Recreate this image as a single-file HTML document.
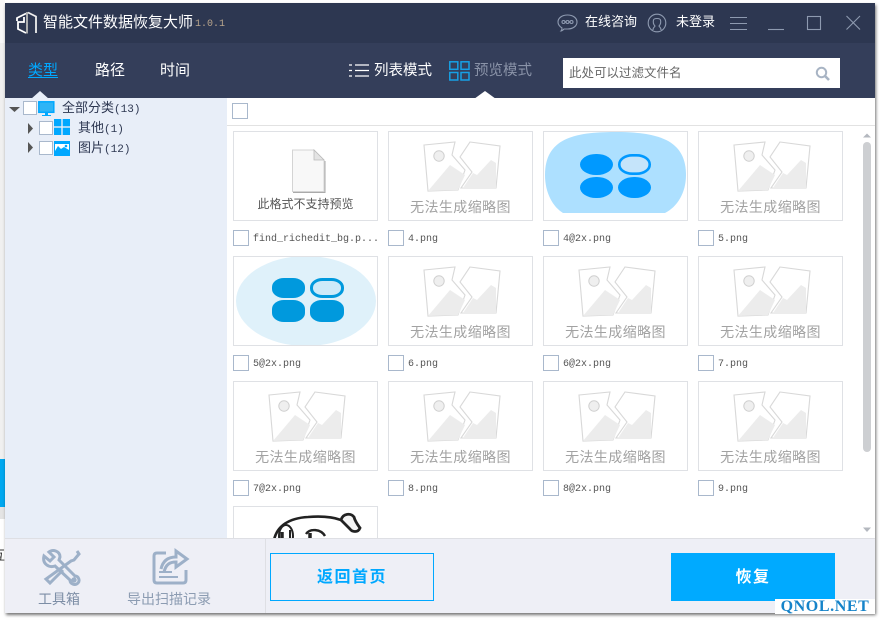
<!DOCTYPE html>
<html><head><meta charset="utf-8"><style>
html,body{margin:0;padding:0;width:880px;height:620px;overflow:hidden;background:#fff}
body{position:relative;font-family:"Liberation Sans","Noto Sans CJK SC",sans-serif}
.a{position:absolute;white-space:nowrap}
.cb{position:absolute;box-sizing:border-box;width:16px;height:16px;background:#fff;border:1px solid #a9b8cc}
.th{position:absolute;box-sizing:border-box;width:145px;height:90px;border:1px solid #dfe1e5;background:#fff;overflow:hidden}
.th svg{position:absolute;left:-1px;top:-1px}
.th span{position:absolute;left:0;width:143px;top:65px;text-align:center;font-size:14px;letter-spacing:.4px;line-height:20px;color:#a2a2a2}
.lb{position:absolute;font:10px/12px "Liberation Mono",monospace;color:#555;white-space:nowrap}
.tr{font-size:13px;line-height:17px;color:#2d3751}
.tr i{font:normal 11px/17px "Liberation Mono",monospace}
</style></head><body>
<svg width="0" height="0" style="position:absolute"><defs>
<g id="br"><path d="M36 14L67 11 64 24 77 39 70 59 40 60Z" fill="#fff" stroke="#d8d8d8" stroke-width="1.100"/><path d="M82 11L112 15 108 57 73 57 84 41 72 26Z" fill="#fff" stroke="#d8d8d8" stroke-width="1.100"/><path d="M40 60L62 34 77 44 70 59Z" fill="#ececec"/><path d="M75 57L85 42 89 44 103 29 108 32 108 57Z" fill="#ececec"/><circle cx="51" cy="25" r="5.200" fill="#efefef" stroke="#d0d0d0"/></g>
</defs></svg>

<!-- background window behind -->
<div class="a" style="left:0;top:0;width:5px;height:43px;background:#f8f8f8"></div>
<div class="a" style="left:0;top:43px;width:5px;height:416px;background:#f0f0f0"></div>
<div class="a" style="left:0;top:459px;width:5px;height:48px;background:#00a8f0"></div>
<div class="a" style="left:0;top:507px;width:5px;height:12px;background:#e4e4e4"></div>
<div class="a" style="left:-8px;top:548px;font-size:13px;line-height:16px;color:#333">互</div>

<!-- window -->
<div class="a" style="left:5px;top:3px;width:870px;height:610px;background:#fff;box-shadow:1px 2px 3px rgba(0,0,0,.55)"></div>
<div class="a" style="left:5px;top:3px;width:870px;height:40px;background:#2d3751"></div>
<div class="a" style="left:5px;top:43px;width:870px;height:55px;background:#343e5a"></div>

<!-- logo -->
<svg class="a" style="left:0;top:0" width="40" height="40" fill="none" stroke="#fff" stroke-width="1.800"><path d="M26 13.500L17 18V21M24 17V22H18V29L26 33"/><path d="M27 12V33.500" stroke="#bbb"/><path d="M28 12.500L36 16.500V33" stroke="#eee"/></svg>
<div class="a" style="left:43px;top:12px;font-size:15px;line-height:22px;color:#fff">智能文件数据恢复大师</div>
<div class="a" style="left:195px;top:18px;font:10px/13px 'Liberation Mono',monospace;color:#b9a58c">1.0.1</div>

<!-- header right -->
<svg class="a" style="left:556px;top:12px" width="24" height="24" fill="none" stroke="#8e9ab0" stroke-width="1.100"><path d="M5 19C6 18 6 17 6 16 3 14 2 12 2 10 2 6 6 3 11.500 3S21 6 21 10 17 17 11.500 17C10 17 9 17 8 17 7 18 6 19 5 19Z"/><circle cx="7.500" cy="10" r="1.500"/><circle cx="11.500" cy="10" r="1.500"/><circle cx="15.500" cy="10" r="1.500"/></svg>
<div class="a" style="left:585px;top:13px;font-size:13px;line-height:18px;color:#fff">在线咨询</div>
<svg class="a" style="left:647px;top:13px" width="20" height="20" fill="none" stroke="#8e9ab0" stroke-width="1.100"><circle cx="10" cy="10" r="8.800"/><path d="M6 17C6 14 8 14 8 13 6 11 6 9 6.500 7 7 5 13 5 13.500 7 14 9 14 11 12 13 12 14 14 14 14 17"/></svg>
<div class="a" style="left:676px;top:13px;font-size:13px;line-height:18px;color:#fff">未登录</div>
<svg class="a" style="left:728px;top:12px" width="136" height="22" fill="none" stroke="#8e9ab0" stroke-width="1.100"><path d="M2 5.500H19M2 11.500H19M2 17.500H19"/><path d="M40 17.500H56"/><rect x="79.500" y="4.500" width="13" height="13"/><path d="M118.500 4L132 17.500M132 4L118.500 17.500"/></svg>

<!-- tabs -->
<div class="a" style="left:28px;top:60px;font-size:15px;line-height:21px;color:#00a8ff">类型</div>
<div class="a" style="left:28px;top:77px;width:30px;height:1px;background:#00a8ff"></div>
<div class="a" style="left:95px;top:60px;font-size:15px;line-height:21px;color:#fff">路径</div>
<div class="a" style="left:160px;top:60px;font-size:15px;line-height:21px;color:#fff">时间</div>
<svg class="a" style="left:31px;top:90px" width="18" height="9"><path d="M0 9L9 1 18 9Z" fill="#e8eef8"/></svg>

<svg class="a" style="left:349px;top:63px" width="21" height="15" fill="none" stroke="#fff" stroke-width="1.200"><path d="M0 2H3M0 7.500H3M0 13H3M6 2H20M6 7.500H20M6 13H20"/></svg>
<div class="a" style="left:374px;top:61px;font-size:14.500px;line-height:21px;color:#fff">列表模式</div>
<svg class="a" style="left:449px;top:61px" width="21" height="20" fill="none" stroke="#16a0e6" stroke-width="1.500"><rect x=".8" y=".8" width="8" height="7.500"/><rect x="12" y=".8" width="8" height="7.500"/><rect x=".8" y="11.500" width="8" height="7.500"/><rect x="12" y="11.500" width="8" height="7.500"/></svg>
<div class="a" style="left:474px;top:61px;font-size:14.500px;line-height:21px;color:#8a93a8">预览模式</div>
<svg class="a" style="left:474px;top:90px" width="22" height="9"><path d="M0 9L11 1 22 9Z" fill="#fff"/></svg>

<div class="a" style="left:563px;top:58px;width:277px;height:30px;background:#fff"></div>
<div class="a" style="left:569px;top:65px;font-size:12.500px;line-height:17px;color:#666">此处可以过滤文件名</div>
<svg class="a" style="left:815px;top:66px" width="15" height="15" fill="none" stroke="#a8b4c4" stroke-width="2"><circle cx="6.500" cy="6.500" r="4.700"/><path d="M10 10L14 14" stroke-width="2.600"/></svg>

<!-- left panel -->
<div class="a" style="left:5px;top:98px;width:222px;height:440px;background:#e8eef8"></div>
<svg class="a" style="left:5px;top:98px" width="30" height="60"><path d="M4 9H15L9.500 14Z" fill="#555"/><path d="M23 25V36L28 30.500Z" fill="#555"/><path d="M23 44V55L28 49.500Z" fill="#555"/></svg>
<div class="cb" style="left:23px;top:101px;width:14px;height:14px"></div>
<svg class="a" style="left:38px;top:100px" width="17" height="17"><rect x=".8" y="1.800" width="15" height="10.500" fill="#2fb4f6" stroke="#00a8ff" stroke-width="1.500"/><path d="M7 13H10V15H13V16H4V15H7Z" fill="#00a8ff"/></svg>
<div class="a tr" style="left:62px;top:99px">全部分类<i>(13)</i></div>
<div class="cb" style="left:39px;top:121px;width:14px;height:14px"></div>
<svg class="a" style="left:54px;top:119px" width="16" height="16" fill="#00a8ff"><rect width="7.300" height="7.300"/><rect x="8.700" width="7.300" height="7.300"/><rect y="8.700" width="7.300" height="7.300"/><rect x="8.700" y="8.700" width="7.300" height="7.300"/></svg>
<div class="a tr" style="left:78px;top:119px">其他<i>(1)</i></div>
<div class="cb" style="left:39px;top:141px;width:14px;height:14px"></div>
<svg class="a" style="left:54px;top:141px" width="16" height="15"><rect width="16" height="15" fill="#00a8ff"/><path d="M1 10L4 5 7 8 10 6 15 9V3H1Z" fill="#fff"/><circle cx="12" cy="5" r="1.300" fill="#00a8ff"/></svg>
<div class="a tr" style="left:78px;top:139px">图片<i>(12)</i></div>

<!-- content -->
<div class="cb" style="left:232px;top:103px"></div>
<div class="a" style="left:227px;top:125px;width:648px;height:1px;background:#e2e2e2"></div>

<!-- row1 -->
<div class="th" style="left:233px;top:131px"><svg width="145" height="90"><path d="M59.500 19H81L91 29V60.500H59.500Z" fill="#f8f8f8" stroke="#d4d4d4"/><path d="M81 19V29H91Z" fill="#e4e4e4" stroke="#bbb" stroke-width=".8"/><path d="M60 61.500H92V30" fill="none" stroke="#aaa"/></svg><span style="top:62px;font-size:12px;letter-spacing:0;color:#555">此格式不支持预览</span></div>
<div class="th" style="left:388px;top:131px"><svg width="145" height="90"><use href="#br"/></svg><span>无法生成缩略图</span></div>
<div class="th" style="left:543px;top:131px"><svg width="145" height="90"><path d="M2 44C2 8 30 1 72 1S143 8 143 44C143 62 134 76 122 82H20C10 76 2 62 2 44Z" fill="#ade0ff"/><g fill="#0099ff"><rect x="37" y="23" width="33" height="21" rx="16" ry="10.500"/><rect x="37" y="46" width="33" height="21" rx="16" ry="10.500"/><rect x="75" y="46" width="33" height="21" rx="16" ry="10.500"/></g><rect x="76.300" y="24.300" width="30.400" height="18.400" rx="13" ry="9" fill="#c5e4fa" stroke="#0099ff" stroke-width="2.600"/></svg></div>
<div class="th" style="left:698px;top:131px"><svg width="145" height="90"><use href="#br"/></svg><span>无法生成缩略图</span></div>
<div class="cb" style="left:233px;top:230px"></div><div class="lb" style="left:253px;top:234px">find_richedit_bg.p...</div>
<div class="cb" style="left:388px;top:230px"></div><div class="lb" style="left:408px;top:234px">4.png</div>
<div class="cb" style="left:543px;top:230px"></div><div class="lb" style="left:563px;top:234px">4@2x.png</div>
<div class="cb" style="left:698px;top:230px"></div><div class="lb" style="left:718px;top:234px">5.png</div>

<!-- row2 -->
<div class="th" style="left:233px;top:256px"><svg width="145" height="90"><ellipse cx="73" cy="45" rx="70" ry="45" fill="#dff1fa"/><g fill="#0099dd"><rect x="39" y="22" width="33" height="20" rx="12" ry="9"/><rect x="39" y="44" width="33" height="22" rx="12" ry="9"/><rect x="77" y="44" width="34" height="22" rx="12" ry="9"/></g><rect x="78.500" y="23.500" width="31" height="17" rx="11" ry="8" fill="#cdeaf9" stroke="#0099dd" stroke-width="3"/></svg></div>
<div class="th" style="left:388px;top:256px"><svg width="145" height="90"><use href="#br"/></svg><span>无法生成缩略图</span></div>
<div class="th" style="left:543px;top:256px"><svg width="145" height="90"><use href="#br"/></svg><span>无法生成缩略图</span></div>
<div class="th" style="left:698px;top:256px"><svg width="145" height="90"><use href="#br"/></svg><span>无法生成缩略图</span></div>
<div class="cb" style="left:233px;top:355px"></div><div class="lb" style="left:253px;top:359px">5@2x.png</div>
<div class="cb" style="left:388px;top:355px"></div><div class="lb" style="left:408px;top:359px">6.png</div>
<div class="cb" style="left:543px;top:355px"></div><div class="lb" style="left:563px;top:359px">6@2x.png</div>
<div class="cb" style="left:698px;top:355px"></div><div class="lb" style="left:718px;top:359px">7.png</div>

<!-- row3 -->
<div class="th" style="left:233px;top:381px"><svg width="145" height="90"><use href="#br"/></svg><span>无法生成缩略图</span></div>
<div class="th" style="left:388px;top:381px"><svg width="145" height="90"><use href="#br"/></svg><span>无法生成缩略图</span></div>
<div class="th" style="left:543px;top:381px"><svg width="145" height="90"><use href="#br"/></svg><span>无法生成缩略图</span></div>
<div class="th" style="left:698px;top:381px"><svg width="145" height="90"><use href="#br"/></svg><span>无法生成缩略图</span></div>
<div class="cb" style="left:233px;top:480px"></div><div class="lb" style="left:253px;top:484px">7@2x.png</div>
<div class="cb" style="left:388px;top:480px"></div><div class="lb" style="left:408px;top:484px">8.png</div>
<div class="cb" style="left:543px;top:480px"></div><div class="lb" style="left:563px;top:484px">8@2x.png</div>
<div class="cb" style="left:698px;top:480px"></div><div class="lb" style="left:718px;top:484px">9.png</div>

<!-- row4 -->
<div class="th" style="left:233px;top:506px;height:40px"><svg width="145" height="40" fill="none" stroke="#222"><path d="M41 34C44 20 56 12 75 11 88 10 100 11 108 14" stroke-width="2.600"/><path d="M108 14C110 7 118 7 121 11 122 15 124 18 127 22 125 27 119 26 117 23L108 14Z" stroke-width="2.800" fill="#f4f4f4"/><ellipse cx="53" cy="30" rx="7" ry="11" stroke-width="2"/><path d="M49 26V36" stroke-width="3.500"/><path d="M57 24V36" stroke-width="2"/><path d="M73 28C77 22 88 23 92 30" stroke-width="2.400"/><path d="M77 27V36" stroke-width="3.500"/></svg></div>

<!-- scrollbar -->
<svg class="a" style="left:862px;top:131px" width="10" height="8"><path d="M1 6.500L5 2.500 9 6.500Z" fill="#b4b8bf"/></svg>
<div class="a" style="left:863px;top:142px;width:8px;height:310px;border-radius:4px;background:#cdcfd2"></div>
<svg class="a" style="left:862px;top:526px" width="10" height="8"><path d="M1 1.500H9L5 6Z" fill="#b4b8bf"/></svg>

<!-- bottom bar -->
<div class="a" style="left:5px;top:538px;width:870px;height:75px;background:#eeeff6;border-top:1px solid #dedfe4;box-sizing:border-box"></div>
<div class="a" style="left:265px;top:539px;width:1px;height:74px;background:#dedfe4"></div>
<svg class="a" style="left:41px;top:548px" width="40" height="39" fill="none" stroke="#9db0c8" stroke-width="3"><path d="M3 8L9 13 13 9 8 4C12 1 19 3 19 9L18 12 34 28C38 28 39 33 37 35 34 38 29 36 29 32L14 18C8 20 1 16 3 8Z"/><path d="M36 3L38 6 33 12 30 13 5 31 9 35 22 22"/><circle cx="33" cy="32" r="1.200" fill="#9db0c8"/></svg>
<div class="a" style="left:38px;top:590px;font-size:14px;line-height:19px;color:#7d8ea6">工具箱</div>
<svg class="a" style="left:152px;top:548px" width="38" height="38" fill="none" stroke="#9db0c8" stroke-width="3"><path d="M14 5H5Q2 5 2 8V32Q2 35 5 35H31Q34 35 34 32V22"/><path d="M9 21C11 12 17 9 24 9V3L35 11 24 19 24 14C18 14 14 16 12 24"/><path d="M7 24H20M7 29H26" stroke-width="2"/></svg>
<div class="a" style="left:127px;top:590px;font-size:14px;line-height:19px;color:#8c9cb2">导出扫描记录</div>
<div class="a" style="left:270px;top:553px;width:164px;height:48px;box-sizing:border-box;border:1px solid #00a8ff;color:#00a8ff;font-size:16px;font-weight:700;letter-spacing:1.500px;line-height:48px;text-align:center">返回首页</div>
<div class="a" style="left:671px;top:553px;width:164px;height:48px;background:#00aaff;color:#fff;font-size:16px;font-weight:700;letter-spacing:1.500px;line-height:50px;text-align:center">恢复</div>
<div class="a" style="left:775px;top:599px;width:100px;height:15px;background:#fff;color:#1583c9;font:700 16px/15px 'Liberation Serif',serif;letter-spacing:.6px;text-align:center">QNOL.NET</div>
</body></html>
